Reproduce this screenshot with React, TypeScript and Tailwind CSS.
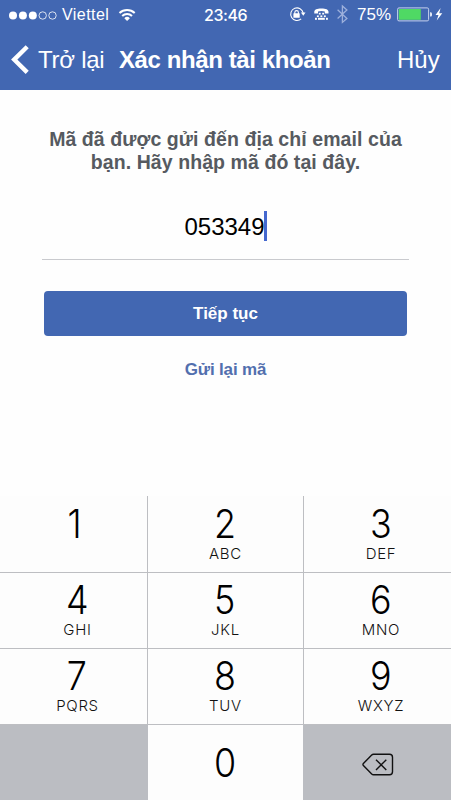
import React from "react";

const KEYS: { digit: string; letters: string }[] = [
  { digit: "1", letters: "" },
  { digit: "2", letters: "ABC" },
  { digit: "3", letters: "DEF" },
  { digit: "4", letters: "GHI" },
  { digit: "5", letters: "JKL" },
  { digit: "6", letters: "MNO" },
  { digit: "7", letters: "PQRS" },
  { digit: "8", letters: "TUV" },
  { digit: "9", letters: "WXYZ" },
];

const COLUMN_PADDING = ["pl-[8px]", "", "pl-[7px]"];

function StatusIcons() {
  return (
    <svg width="162" height="28" viewBox="289 0 162 28" fill="none" className="absolute top-0 right-0">
      {/* orientation lock */}
      <g stroke="white" strokeWidth="1.1">
        <path d="M301.2 18.9A6.3 6.3 0 1 1 303.2 13" />
        <path d="M294.8 14v-1.6a1.8 1.8 0 0 1 3.6 0V14" />
      </g>
      <path d="M300.9 12.6h4.6l-2.2 3.2z" fill="white" />
      <rect x="293.4" y="13.2" width="6.3" height="4.6" rx=".5" fill="white" />
      {/* teletype */}
      <path d="M314.3 13.6v-1.8c0-2.2 2.6-3.4 7.1-3.4s7.1 1.2 7.1 3.4v1.8h-3.7v-2.1c-2-.7-4.8-.7-6.8 0v2.1z" fill="white" />
      <g fill="white">
        <rect x="318.8" y="12.8" width="1.9" height="1.7" />
        <rect x="322.2" y="12.8" width="1.9" height="1.7" />
        <rect x="316.9" y="15.4" width="1.9" height="1.7" />
        <rect x="320.4" y="15.4" width="1.9" height="1.7" />
        <rect x="323.9" y="15.4" width="1.9" height="1.7" />
        <rect x="315" y="17.8" width="1.9" height="2" />
        <rect x="318" y="17.8" width="6.8" height="2" />
        <rect x="326" y="17.8" width="1.9" height="2" />
      </g>
      {/* bluetooth */}
      <path d="M337.6 9.8l9.3 8.6-4.5 4V6l4.5 4.1-9.3 8.4" stroke="#9db0dc" strokeWidth="1.3" />
      {/* battery */}
      <rect x="397.6" y="7.9" width="31" height="13" rx="1.4" stroke="#c5d1ed" strokeWidth="1" />
      <rect x="398.8" y="9" width="22" height="10.8" fill="#4fd964" />
      <path d="M430.2 12.2h.6q1.1 0 1.1 2.2t-1.1 2.2h-.6z" fill="white" />
      <path d="M440.6 8l-5.1 7h3l-1.8 5.6 5.6-7.3h-3.1z" fill="white" />
    </svg>
  );
}

function Header() {
  return (
    <header className="h-[90px] bg-[#4267b2] text-white">
      <div className="relative h-[30px] flex items-center whitespace-nowrap">
        <svg width="50" height="28" viewBox="0 0 50 28" className="ml-[8px] shrink-0">
          <g fill="white">
            <circle cx="5" cy="14.5" r="4" />
            <circle cx="14.9" cy="14.5" r="4" />
            <circle cx="24.8" cy="14.5" r="4" />
          </g>
          <g fill="none" stroke="white" strokeWidth=".8">
            <circle cx="34.7" cy="14.5" r="3.7" />
            <circle cx="44.5" cy="14.5" r="3.7" />
          </g>
        </svg>
        <span className="ml-[4px] w-[48px] text-[16px] leading-[30px] tracking-[0.45px]">Viettel</span>
        <svg width="18" height="28" viewBox="118 0 18 28" fill="none" className="ml-[8px] shrink-0">
          <path d="M119.5 12a11 11 0 0 1 15.2 0M122.2 15a7 7 0 0 1 9.8 0" stroke="white" strokeWidth="2" />
          <path d="M124.3 17.2a4 4 0 0 1 5.6 0l-2.8 2.9z" fill="white" />
        </svg>
        <span className="ml-[68px] w-[50px] text-[16px] leading-[28px] font-medium font-['Inter',sans-serif] tracking-[-0.45px]">23:46</span>
        <span className="ml-[103px] text-[17px] leading-[30px] tracking-[0.1px]">75%</span>
        <StatusIcons />
      </div>
      <div className="flex h-[60px] items-center whitespace-nowrap text-[24px] leading-[60px]">
        <svg width="18" height="60" viewBox="11 30 18 60" fill="none" className="ml-[11px] shrink-0">
          <path d="M27.2 46.8L14.2 59.6l13 12.8" stroke="white" strokeWidth="4.4" />
        </svg>
        <span className="ml-[9px] w-[81px] tracking-[-0.25px]">Trở lại</span>
        <span className="w-[278px] font-bold tracking-[-0.4px]">Xác nhận tài khoản</span>
        <span>Hủy</span>
      </div>
    </header>
  );
}

function Backspace() {
  return (
    <svg width="32" height="24" viewBox="0 0 32 24" fill="none" stroke="#111" strokeWidth="1.4">
      <path d="M11.5 1.2h16q3 0 3 3v14.6q0 3-3 3h-16q-1 0-1.8-.8L1.4 12.6q-.9-1.1 0-2.2L9.7 2q.8-.8 1.8-.8z" />
      <path d="M14 6.7l10.3 10.2M24.3 6.7L14 16.9" />
    </svg>
  );
}

function Keypad() {
  return (
    <div className="grid h-[304px] grid-cols-[148px_156px_147px] grid-rows-[77px_76px_76px_75px] bg-[#fdfdfd] text-black">
      {KEYS.map((key, i) => (
        <button
          key={key.digit}
          className={`flex flex-col items-center border-b border-[#bdbec2] ${i < 3 ? "pt-[8px]" : "pt-[7px]"} ${i % 3 < 2 ? "border-r" : ""} ${COLUMN_PADDING[i % 3]}`}
        >
          <span className={`h-[39px] scale-x-[0.92] font-['Inter',sans-serif] text-[39px] leading-[39px] font-light ${i === 0 ? "mr-[5px]" : "mr-px"}`}>
            {key.digit}
          </span>
          <span className="mt-[2px] h-[18px] font-['Inter',sans-serif] text-[15px] leading-[18px] font-light tracking-[0.7px] text-[#111]">{key.letters}</span>
        </button>
      ))}
      <div className="bg-[#bbbdc2]" />
      <button className="flex justify-center pt-[18px]">
        <span className="mr-[2px] h-[39px] scale-x-[0.92] font-['Inter',sans-serif] text-[39px] leading-[39px] font-light">0</span>
      </button>
      <button className="-ml-px flex items-center justify-center bg-[#bbbdc2] pt-[4px] pl-[2px]">
        <Backspace />
      </button>
    </div>
  );
}

export default function App() {
  return (
    <div className="flex h-[800px] w-[451px] flex-col overflow-hidden bg-[#fefefe] font-['Liberation_Sans',Arial,sans-serif]">
      <Header />
      <main className="flex h-[406px] flex-col items-center">
        <p className="mt-[38px] text-center text-[19.5px] leading-[23px] font-bold tracking-[0.08px] whitespace-nowrap text-[#565a60]">
          Mã đã được gửi đến địa chỉ email của
          <br />
          bạn. Hãy nhập mã đó tại đây.
        </p>
        <div className="mt-[36px] flex h-[50px] w-[367px] justify-center border-b border-[#c9cace]">
          <span className="pt-px text-[24px] leading-[32px] text-black">053349</span>
          <span className="-ml-px mt-px h-[30px] w-[3px] bg-[#4468cf]" />
        </div>
        <button className="mt-[31px] h-[45px] w-[363px] rounded-[4px] bg-[#4267b2] text-[17px] leading-[45px] font-bold text-white">
          Tiếp tục
        </button>
        <button className="mt-[22px] text-[17px] leading-[24px] font-bold tracking-[-0.15px] text-[#526fae]">Gửi lại mã</button>
      </main>
      <Keypad />
    </div>
  );
}
